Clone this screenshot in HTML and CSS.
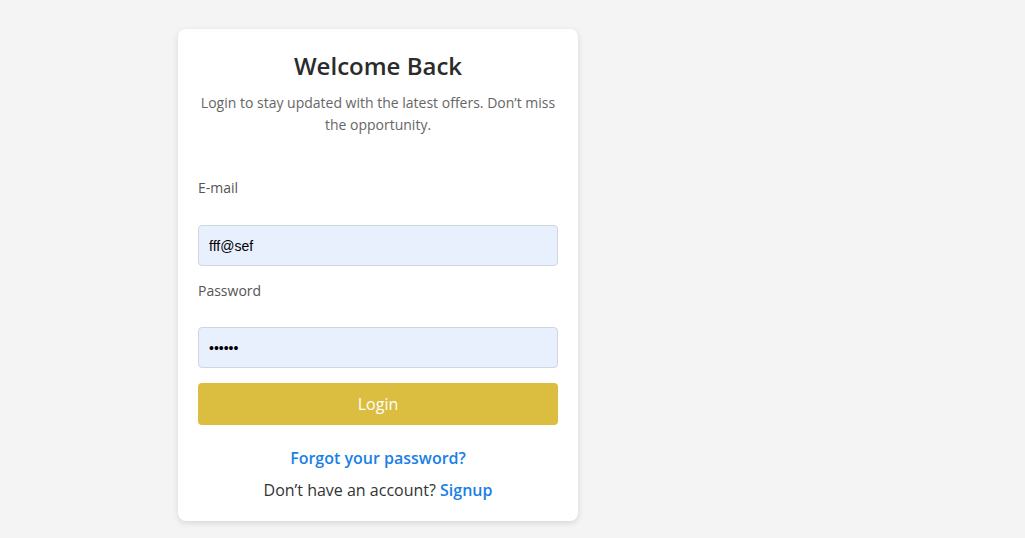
FILE: index.html
```html
<!DOCTYPE html>
<html lang="en">
<head>
<meta charset="utf-8">
<title>Login</title>
<link rel="stylesheet" href="styles.css">
</head>
<body>
<main class="page">
  <section class="card">
    <h1 class="title">Welcome Back</h1>
    <p class="subtitle">Login to stay updated with the latest offers. Don’t miss the opportunity.</p>
    <form class="form">
      <label class="label" for="email">E-mail</label>
      <input class="input" id="email" type="text" value="fff@sef">
      <label class="label label-pw" for="pw">Password</label>
      <input class="input" id="pw" type="password" value="123456">
      <button class="btn" type="button">Login</button>
    </form>
    <a class="forgot" href="#">Forgot your password?</a>
    <p class="signup">Don’t have an account? <a href="#">Signup</a></p>
  </section>
</main>
</body>
</html>
```
FILE: styles.css
```css
* { box-sizing: border-box; }
html, body { margin: 0; padding: 0; }
body {
  background: #f4f4f4;
  font-family: "Open Sans", "Liberation Sans", sans-serif;
  width: 1025px;
  height: 538px;
  overflow: hidden;
}
.page {
  padding: 29px 0 0 178px;
}
.card {
  width: 400px;
  background: #fff;
  border-radius: 8px;
  box-shadow: 0 2px 6px rgba(0,0,0,0.12);
  padding: 20px 20px 19px;
  text-align: center;
}
.title {
  margin: 1px 0 10px;
  font-size: 24px;
  line-height: 32px;
  font-weight: 600;
  color: #2b2b2b;
}
.subtitle {
  margin: 0;
  font-size: 14px;
  line-height: 22px;
  color: #666;
}
.form {
  display: flex;
  flex-direction: column;
  text-align: left;
  margin-top: 42px;
}
.label {
  font-size: 14px;
  line-height: 20px;
  color: #555;
  margin-bottom: 27px;
}
.label-pw { margin-bottom: 26px; }
.input {
  height: 41px;
  border: 1px solid #cfd6e0;
  border-radius: 4px;
  background: #e8f0fe;
  padding: 0 10px;
  font-family: "Liberation Sans", Arial, sans-serif;
  font-size: 14px;
  color: #000;
  margin-bottom: 15px;
}
.btn {
  height: 42px;
  border: none;
  border-radius: 4px;
  background: #dbbe3f;
  color: #fff;
  font-family: "Open Sans", "Liberation Sans", sans-serif;
  font-size: 16px;
}
.forgot {
  display: block;
  margin-top: 21px;
  font-size: 16px;
  line-height: 24px;
  font-weight: 600;
  color: #1a7fe6;
  text-decoration: none;
}
.signup {
  margin: 8px 0 0;
  font-size: 16px;
  line-height: 24px;
  color: #333;
}
.signup a {
  color: #1a7fe6;
  font-weight: 600;
  text-decoration: none;
}
```
